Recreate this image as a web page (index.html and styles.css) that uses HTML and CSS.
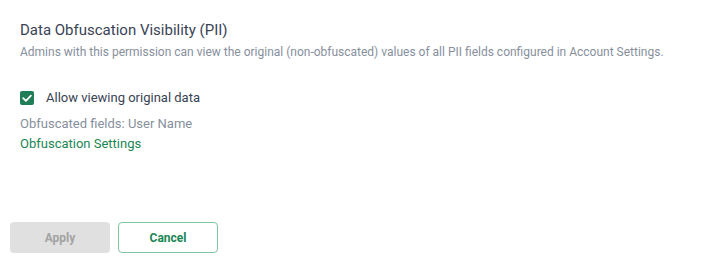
FILE: index.html
```html
<!DOCTYPE html>
<html>
<head>
<meta charset="utf-8">
<link rel="stylesheet" href="styles.css">
</head>
<body>
<div class="page">
  <section class="section">
    <h2 class="title">Data Obfuscation Visibility (PII)</h2>
    <p class="desc">Admins with this permission can view the original (non-obfuscated) values of all PII fields configured in Account Settings.</p>
    <label class="check-row">
      <span class="checkbox">
        <svg width="14" height="14" viewBox="0 0 14 14"><path d="M3.2 7.2 L5.9 9.8 L10.9 4.6" fill="none" stroke="#fff" stroke-width="1.8" stroke-linecap="round" stroke-linejoin="round"/></svg>
      </span>
      <span class="check-label">Allow viewing original data</span>
    </label>
    <div class="fields">Obfuscated fields: User Name</div>
    <a class="link">Obfuscation Settings</a>
  </section>
  <div class="actions">
    <button class="btn btn-apply" disabled>Apply</button>
    <button class="btn btn-cancel">Cancel</button>
  </div>
</div>
</body>
</html>
```
FILE: styles.css
```css
* { box-sizing: border-box; }
html, body { margin: 0; padding: 0; background: #fff; }
body { font-family: Roboto, "Noto Sans", sans-serif; width: 708px; height: 270px; overflow: hidden; }
.page { padding: 20px 10px 0 10px; }
.section { padding-left: 10px; }
.title { margin: 0; font-size: 15px; line-height: 20px; font-weight: 400; color: #394355; }
.desc { margin: 4px 0 0; font-size: 12px; line-height: 16px; color: #878f9d; }
.check-row { display: flex; align-items: center; gap: 12px; margin-top: 30px; height: 16px; }
.checkbox { width: 14px; height: 14px; border-radius: 2px; background: #1f7d57; display: flex; align-items: center; justify-content: center; }
.checkbox svg { display: block; }
.check-label { font-size: 13px; line-height: 16px; color: #394355; }
.fields { margin-top: 8px; font-size: 13px; line-height: 20px; color: #878f9d; }
.link { display: block; font-size: 13px; line-height: 20px; color: #1a8654; text-decoration: none; }
.actions { display: flex; gap: 8px; margin-top: 68px; }
.btn { width: 100px; height: 31px; border-radius: 4px; font-family: Roboto, sans-serif; font-size: 12px; font-weight: 700; }
.btn-apply { background: #e0e0e0; border: none; color: #a3a3a3; }
.btn-cancel { background: #fff; border: 1px solid #7fc4a4; color: #1a8654; }
```
